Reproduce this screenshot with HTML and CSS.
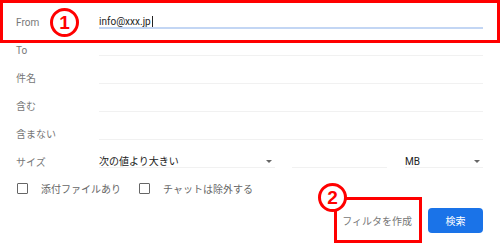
FILE: index.html
```html
<!DOCTYPE html>
<html lang="ja">
<head>
<meta charset="utf-8">
<link rel="stylesheet" href="styles.css">
</head>
<body>
<div class="page">
  <div class="form">
    <div class="row">
      <div class="label">From</div>
      <div class="field active"><span class="val">info@xxx.jp</span><span class="caret"></span></div>
    </div>
    <div class="row">
      <div class="label">To</div>
      <div class="field"></div>
    </div>
    <div class="row">
      <div class="label">件名</div>
      <div class="field"></div>
    </div>
    <div class="row">
      <div class="label">含む</div>
      <div class="field"></div>
    </div>
    <div class="row">
      <div class="label">含まない</div>
      <div class="field"></div>
    </div>
    <div class="row">
      <div class="label">サイズ</div>
      <div class="sizes">
        <div class="field select sel1"><span class="val">次の値より大きい</span><span class="arrow"></span></div>
        <div class="field num"></div>
        <div class="field select sel2"><span class="val">MB</span><span class="arrow"></span></div>
      </div>
    </div>
    <div class="checks">
      <div class="check"><span class="box"></span><span class="ctext">添付ファイルあり</span></div>
      <div class="check"><span class="box"></span><span class="ctext">チャットは除外する</span></div>
    </div>
    <div class="actions">
      <div class="filter">フィルタを作成</div>
      <div class="search">検索</div>
    </div>
  </div>
  <div class="mark mark1"></div>
  <div class="num-circle c1">1</div>
  <div class="mark mark2"></div>
  <div class="num-circle c2">2</div>
</div>
</body>
</html>
```

FILE: styles.css
```css
* { box-sizing: border-box; }
html, body { margin: 0; padding: 0; background: #fff; }
body {
  font-family: Roboto, "Noto Sans CJK JP", sans-serif;
  font-size: 10px;
  color: #222;
}
.page {
  position: relative;
  width: 500px;
  height: 247px;
  overflow: hidden;
}
.form {
  padding: 0 17px 0 16px;
}
.row {
  display: flex;
  align-items: flex-end;
  height: 28px;
}
.label {
  width: 83px;
  flex: none;
  color: #777;
  line-height: 11px;
  padding-bottom: 0;
}
.field {
  flex: 1;
  height: 16px;
  border-bottom: 1px solid #f1f1f1;
  line-height: 11px;
  padding-bottom: 0;
  display: flex;
  align-items: flex-end;
}
.field.active {
  border-bottom: 2px solid #c3d6f4;
  height: 17px;
  margin-bottom: -1px;
}
.caret {
  display: inline-block;
  width: 1px;
  height: 11px;
  background: #222;
  margin-left: 1px;
  margin-bottom: 0;
}
.sizes {
  flex: 1;
  display: flex;
  gap: 17px;
}
.select {
  justify-content: space-between;
}
.sel1 { flex: none; width: 176px; }
.num { flex: none; width: 95px; margin-right: 1px; }
.sel2 { flex: none; width: 78px; }
.arrow {
  width: 0;
  height: 0;
  border-left: 3px solid transparent;
  border-right: 3px solid transparent;
  border-top: 3px solid #666;
  margin: 0 3px 4px 0;
}
.checks {
  display: flex;
  align-items: center;
  height: 40px;
  padding-left: 1px;
  gap: 18px;
}
.check {
  display: flex;
  align-items: center;
}
.box {
  width: 11px;
  height: 11px;
  border: 1.5px solid #666;
  border-radius: 1px;
  margin-right: 13px;
}
.ctext {
  color: #666;
}
.actions {
  display: flex;
  justify-content: flex-end;
  align-items: center;
  gap: 16px;
  height: 25px;
}
.filter {
  color: #777;
}
.search {
  width: 55px;
  height: 25px;
  border-radius: 4px;
  background: #1a73e8;
  color: #fff;
  display: flex;
  align-items: center;
  justify-content: center;
}
.mark {
  position: absolute;
  border: 3px solid #f00;
}
.mark1 { left: 0; top: 0; width: 500px; height: 43px; }
.mark2 { left: 334px; top: 197px; width: 88px; height: 46px; }
.num-circle {
  position: absolute;
  width: 29px;
  height: 29px;
  border: 3px solid #f00;
  border-radius: 50%;
  background: #fff;
  color: #f00;
  font-family: "Liberation Sans", Arial, sans-serif;
  font-weight: bold;
  font-size: 19px;
  display: flex;
  align-items: center;
  justify-content: center;
}
.c1 { left: 50px; top: 8px; }
.c2 { left: 318px; top: 183px; }
```
